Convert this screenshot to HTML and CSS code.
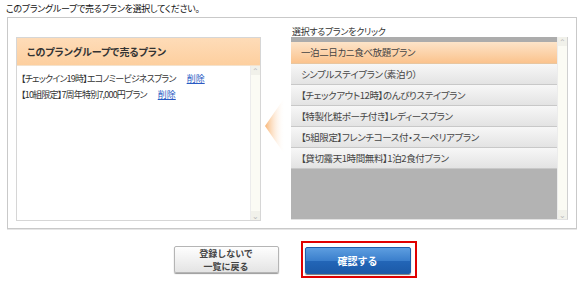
FILE: index.html
```html
<!DOCTYPE html>
<html lang="ja">
<head>
    <meta charset="UTF-8">
    <title>プラングループ設定</title>
    <link rel="stylesheet" href="styles.css">
</head>
<body>

    <p class="lead">このプラングループで売るプランを選択してください。</p>

    <div class="frame">
        <div class="chosen">
            <div class="chosen-head">このプラングループで売るプラン</div>
            <div class="chosen-body">
                <ul class="chosen-list">
                    <li>【チェックイン19時】エコノミービジネスプラン<a href="#" class="del">削除</a></li>
                    <li>【10組限定】7周年特別7,000円プラン<a href="#" class="del">削除</a></li>
                </ul>
                <div class="scroll">
                    <span class="up">&#8963;</span>
                    <span class="down">&#8964;</span>
                </div>
            </div>
        </div>

        <div class="arrow">
            <svg width="24" height="58" viewBox="0 0 24 58">
                <defs>
                    <linearGradient id="fade" x1="0" y1="0" x2="1" y2="0">
                        <stop offset="0" stop-color="#f8b575"/>
                        <stop offset="1" stop-color="#ffffff" stop-opacity="0"/>
                    </linearGradient>
                </defs>
                <polygon points="2,29 22,0 22,58" fill="url(#fade)"/>
            </svg>
        </div>

        <div class="pick">
            <div class="pick-label">選択するプランをクリック</div>
            <div class="pick-box">
                <ul class="pick-list">
                    <li class="on">一泊二日カニ食べ放題プラン</li>
                    <li>シンプルステイプラン（素泊り）</li>
                    <li>【チェックアウト12時】のんびりステイプラン</li>
                    <li>【特製化粧ポーチ付き】レディースプラン</li>
                    <li>【5組限定】フレンチコース付・スーペリアプラン</li>
                    <li>【貸切露天1時間無料】1泊2食付プラン</li>
                </ul>
                <div class="scroll">
                    <span class="up">&#8963;</span>
                    <span class="down">&#8964;</span>
                </div>
            </div>
        </div>
    </div>

    <div class="actions">
        <button class="btn-back">登録しないで<br>一覧に戻る</button>
        <div class="focus">
            <button class="btn-ok">確認する</button>
        </div>
    </div>

</body>
</html>
```

FILE: styles.css
```css
body {
    margin: 0;
    font-family: "Noto Sans CJK JP", sans-serif;
    font-size: 10px;
    font-feature-settings: "palt";
    color: #333;
    background-color: #fff;
}

ul {
    list-style: none;
    margin: 0;
    padding: 0;
}

.lead {
    margin: 0;
    padding: 3px 6px 0;
    line-height: 12px;
    font-size: 9px;
    letter-spacing: -0.3px;
    color: #111;
}

.frame {
    box-sizing: border-box;
    width: 570px;
    height: 212px;
    margin: 2px 0 0 7px;
    padding: 8px 8px 7px 8px;
    border: 1px solid #c9c9c9;
    box-shadow: 0 1px 0 #e6e6e6;
    display: flex;
    align-items: flex-start;
}

/* left: plans already in the group */
.chosen {
    box-sizing: border-box;
    width: 245px;
    height: 184px;
    margin-top: 11px;
    border: 1px solid #d6d6d6;
    display: flex;
    flex-direction: column;
}

.chosen-head {
    height: 27px;
    line-height: 27px;
    padding-left: 10px;
    font-weight: bold;
    color: #333;
    background: linear-gradient(#fedcb8, #fdcf9f);
    border-bottom: 1px solid #f4e2cc;
}

.chosen-body {
    flex: 1;
    display: flex;
}

.chosen-list {
    flex: 1;
    padding: 5px 0 0 4px;
    font-size: 9px;
    letter-spacing: -0.8px;
}

.chosen-list li {
    line-height: 16px;
}

.del {
    margin-left: 11px;
    color: #2a5bc4;
    text-decoration: underline;
    letter-spacing: 0;
}

.scroll {
    width: 9px;
    background-color: #fbfbf4;
    border-left: 1px solid #ececec;
    display: flex;
    flex-direction: column;
    justify-content: space-between;
    align-items: center;
    color: #b9b9b9;
    font-size: 8px;
    line-height: 9px;
}

.scroll span {
    width: 9px;
    text-align: center;
    background-color: #f1f1ea;
}

/* arrow between the two panels */
.arrow {
    width: 30px;
    margin-top: 71px;
    padding-left: 2px;
    box-sizing: border-box;
}

.arrow svg {
    display: block;
}

/* right: plans to pick from */
.pick {
    width: 277px;
}

.pick-label {
    line-height: 11px;
    padding-left: 1px;
    font-size: 9px;
    letter-spacing: -0.3px;
    color: #333;
}

.pick-box {
    box-sizing: border-box;
    height: 183px;
    display: flex;
    border-right: 1px solid #d0d0d0;
    border-bottom: 1px solid #e2e2e2;
}

.pick-list {
    flex: 1;
    background-color: #b3b3b3;
    border-top: 5px solid #acacac;
    font-size: 9.5px;
    letter-spacing: -0.4px;
}

.pick-list li {
    height: 20px;
    line-height: 20px;
    padding-left: 10px;
    color: #444;
    background: linear-gradient(#f7f7f7, #e3e3e3);
    border-bottom: 1px solid #c8c8c8;
}

.pick-list li.on {
    height: 21px;
    line-height: 21px;
    background: linear-gradient(#fde4c9, #fbc38d);
    border-bottom-color: #e8c6a0;
}

/* buttons */
.actions {
    margin-top: 12px;
    padding-left: 2px;
    display: flex;
    justify-content: center;
    align-items: center;
    gap: 22px;
}

.btn-back {
    width: 105px;
    height: 27px;
    padding: 0;
    border: 1px solid #b5b5b5;
    border-radius: 2px;
    background: linear-gradient(#fefefe, #e4e4e4);
    box-shadow: 0 1px 1px #999;
    font-family: inherit;
    font-size: 9px;
    font-weight: bold;
    line-height: 13px;
    color: #444;
}

.focus {
    border: 2px solid #e00000;
    padding: 4px 4px 2px 2px;
}

.btn-ok {
    display: block;
    width: 106px;
    height: 27px;
    padding: 0;
    border: 1px solid #1f5da8;
    border-radius: 2px;
    background: linear-gradient(#5d9ee0, #3b7fcc 50%, #2366b8 51%, #1c5aa8);
    box-shadow: 0 1px 1px #777;
    font-family: inherit;
    font-size: 10px;
    font-weight: bold;
    color: #fff;
}
```
